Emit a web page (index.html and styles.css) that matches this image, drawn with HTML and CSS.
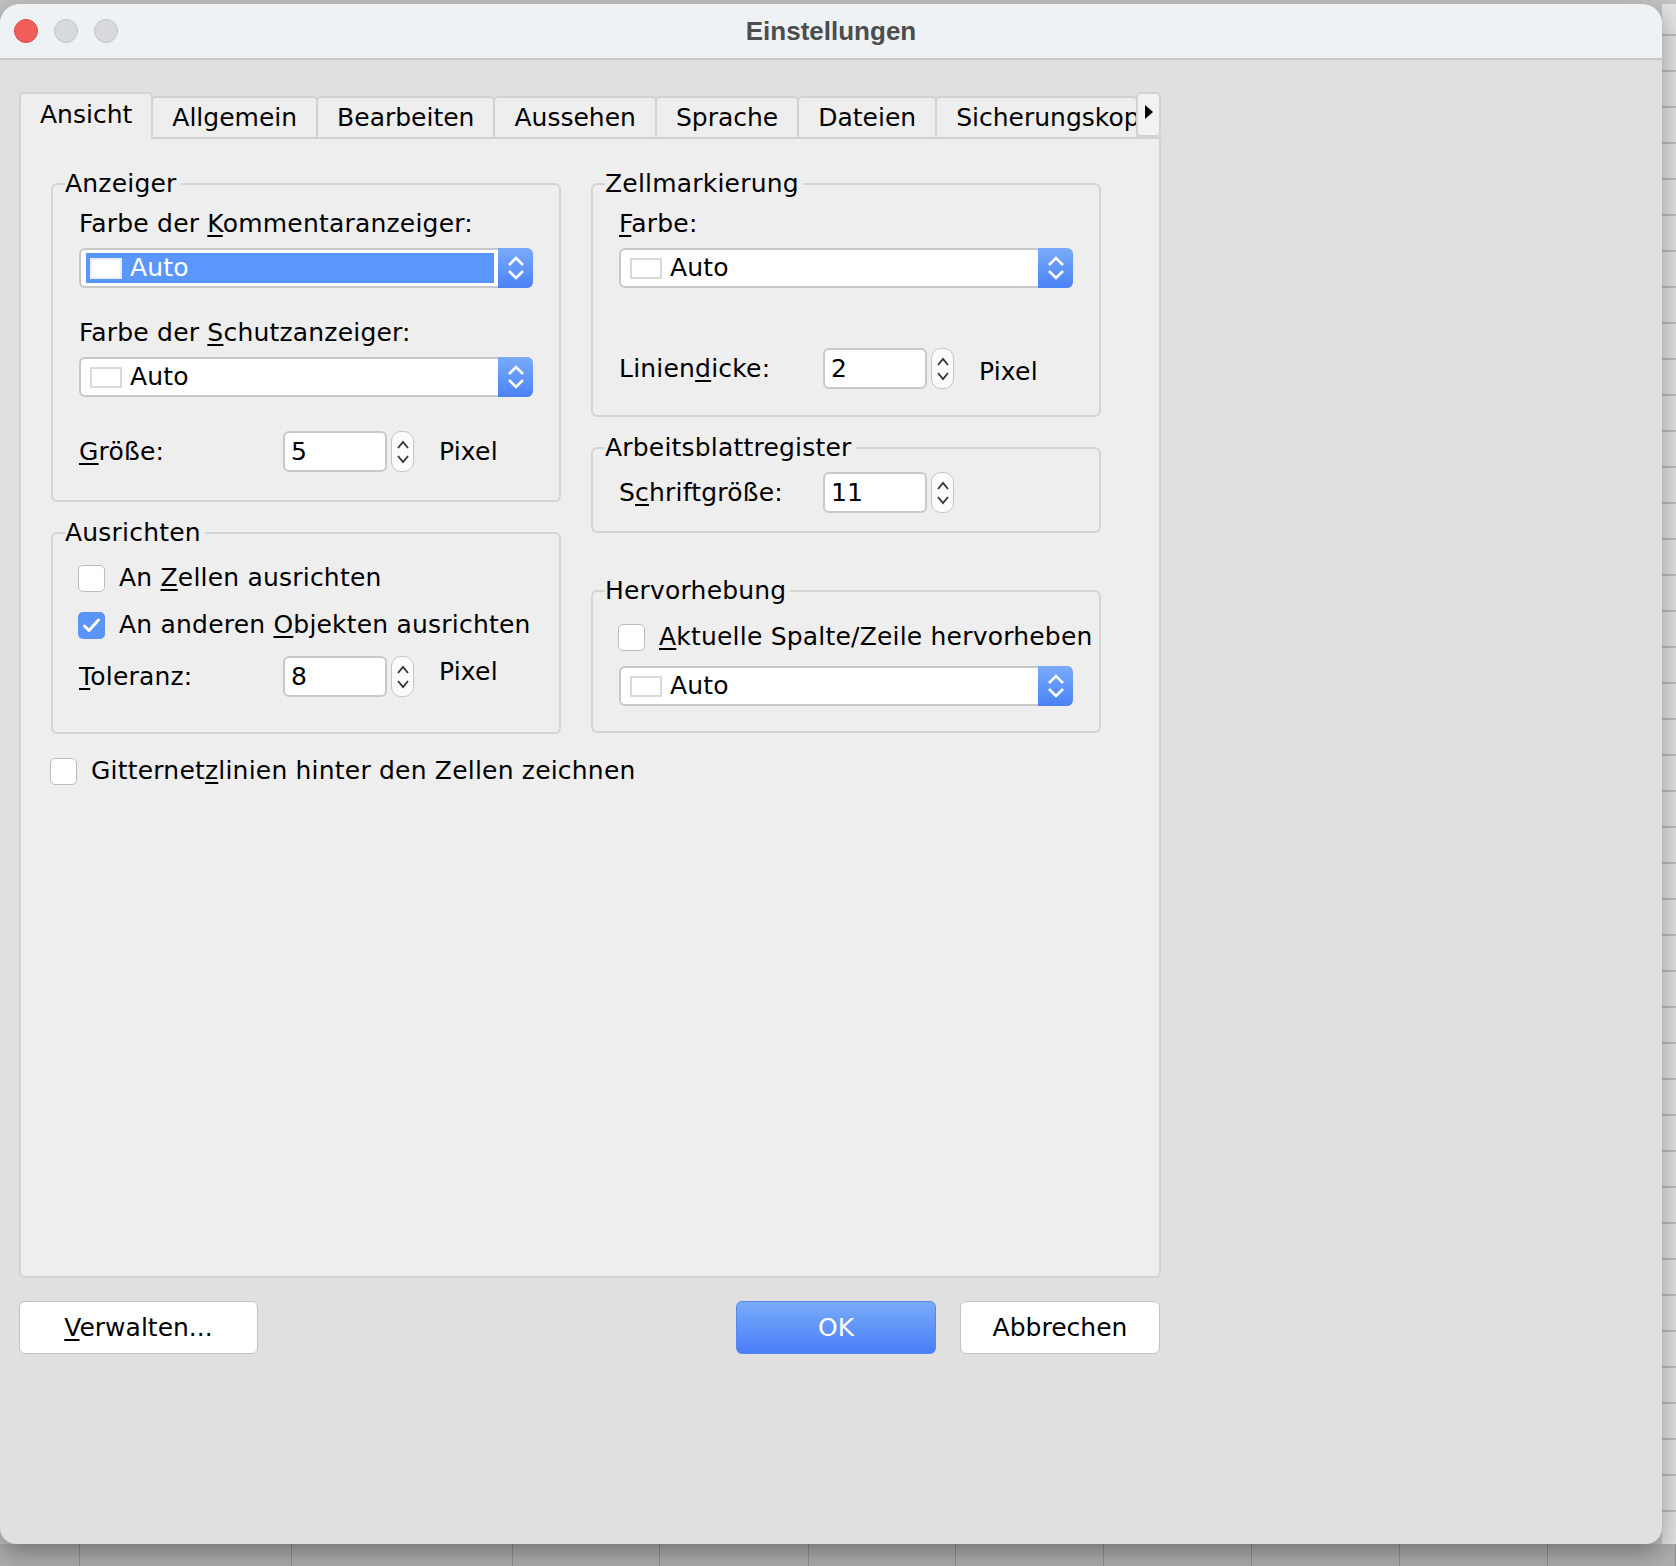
FILE: index.html
```html
<!DOCTYPE html>
<html lang="de">
<head>
  <meta charset="UTF-8">
  <title>Einstellungen</title>
  <link rel="stylesheet" href="styles.css">
</head>
<body>
  <div class="desktop">
    <div class="window">
      <div class="titlebar">
        <div class="lights">
          <span class="light close"></span>
          <span class="light"></span>
          <span class="light"></span>
        </div>
        <div class="title">Einstellungen</div>
      </div>

      <div class="dialog">
        <div class="tabs">
          <div class="tab active">Ansicht</div>
          <div class="tab">Allgemein</div>
          <div class="tab">Bearbeiten</div>
          <div class="tab">Aussehen</div>
          <div class="tab">Sprache</div>
          <div class="tab">Dateien</div>
          <div class="tab clipped">Sicherungskop</div>
          <div class="tab-more">
            <svg width="8" height="14" viewBox="0 0 8 14"><path d="M0 0 L8 7 L0 14 Z" fill="#000"/></svg>
          </div>
        </div>

        <div class="panel">
          <div class="columns">
            <div class="col">
              <fieldset class="group anzeiger">
                <legend>Anzeiger</legend>
                <div class="field-label">Farbe der <u>K</u>ommentaranzeiger:</div>
                <div class="combo focused">
                  <div class="combo-value"><span class="swatch"></span>Auto</div>
                  <div class="combo-arrow">
                    <svg width="16" height="24" viewBox="0 0 16 24"><path d="M1 9 L8 2 L15 9 M1 15 L8 22 L15 15" fill="none" stroke="#fff" stroke-width="2.5"/></svg>
                  </div>
                </div>
                <div class="field-label spaced">Farbe der <u>S</u>chutzanzeiger:</div>
                <div class="combo">
                  <div class="combo-value"><span class="swatch"></span>Auto</div>
                  <div class="combo-arrow">
                    <svg width="16" height="24" viewBox="0 0 16 24"><path d="M1 9 L8 2 L15 9 M1 15 L8 22 L15 15" fill="none" stroke="#fff" stroke-width="2.5"/></svg>
                  </div>
                </div>
                <div class="spin-row size-row">
                  <span class="spin-label"><u>G</u>röße:</span>
                  <span class="spin-field">5</span>
                  <span class="spin-arrows">
                    <svg width="12" height="24" viewBox="0 0 12 24"><path d="M1 8 L6 2 L11 8 M1 16 L6 22 L11 16" fill="none" stroke="#333" stroke-width="1.8"/></svg>
                  </span>
                  <span class="unit">Pixel</span>
                </div>
              </fieldset>

              <fieldset class="group ausrichten">
                <legend>Ausrichten</legend>
                <label class="check"><span class="box"></span><span>An <u>Z</u>ellen ausrichten</span></label>
                <label class="check second"><span class="box checked">
                  <svg width="27" height="27" viewBox="0 0 27 27"><path d="M6.5 14 L11 18.5 L20.5 8" fill="none" stroke="#fff" stroke-width="3" stroke-linecap="round" stroke-linejoin="round"/></svg>
                </span><span>An anderen <u>O</u>bjekten ausrichten</span></label>
                <div class="spin-row tol-row">
                  <span class="spin-label"><u>T</u>oleranz:</span>
                  <span class="spin-field">8</span>
                  <span class="spin-arrows">
                    <svg width="12" height="24" viewBox="0 0 12 24"><path d="M1 8 L6 2 L11 8 M1 16 L6 22 L11 16" fill="none" stroke="#333" stroke-width="1.8"/></svg>
                  </span>
                  <span class="unit raised">Pixel</span>
                </div>
              </fieldset>
            </div>

            <div class="col">
              <fieldset class="group zell">
                <legend>Zellmarkierung</legend>
                <div class="field-label"><u>F</u>arbe:</div>
                <div class="combo">
                  <div class="combo-value"><span class="swatch"></span>Auto</div>
                  <div class="combo-arrow">
                    <svg width="16" height="24" viewBox="0 0 16 24"><path d="M1 9 L8 2 L15 9 M1 15 L8 22 L15 15" fill="none" stroke="#fff" stroke-width="2.5"/></svg>
                  </div>
                </div>
                <div class="spin-row line-row">
                  <span class="spin-label">Linien<u>d</u>icke:</span>
                  <span class="spin-field">2</span>
                  <span class="spin-arrows">
                    <svg width="12" height="24" viewBox="0 0 12 24"><path d="M1 8 L6 2 L11 8 M1 16 L6 22 L11 16" fill="none" stroke="#333" stroke-width="1.8"/></svg>
                  </span>
                  <span class="unit lowered">Pixel</span>
                </div>
              </fieldset>

              <fieldset class="group register">
                <legend>Arbeitsblattregister</legend>
                <div class="spin-row">
                  <span class="spin-label">S<u>c</u>hriftgröße:</span>
                  <span class="spin-field">11</span>
                  <span class="spin-arrows">
                    <svg width="12" height="24" viewBox="0 0 12 24"><path d="M1 8 L6 2 L11 8 M1 16 L6 22 L11 16" fill="none" stroke="#333" stroke-width="1.8"/></svg>
                  </span>
                </div>
              </fieldset>

              <fieldset class="group highlight">
                <legend>Hervorhebung</legend>
                <label class="check"><span class="box"></span><span><u>A</u>ktuelle Spalte/Zeile hervorheben</span></label>
                <div class="combo below-check">
                  <div class="combo-value"><span class="swatch"></span>Auto</div>
                  <div class="combo-arrow">
                    <svg width="16" height="24" viewBox="0 0 16 24"><path d="M1 9 L8 2 L15 9 M1 15 L8 22 L15 15" fill="none" stroke="#fff" stroke-width="2.5"/></svg>
                  </div>
                </div>
              </fieldset>
            </div>
          </div>

          <label class="check grid-check"><span class="box"></span><span>Gitternet<u>z</u>linien hinter den Zellen zeichnen</span></label>
        </div>

        <div class="buttons">
          <button class="btn manage"><u>V</u>erwalten...</button>
          <button class="btn ok">OK</button>
          <button class="btn cancel">Abbrechen</button>
        </div>
      </div>
    </div>
    <div class="sheet-edge"></div>
  </div>

  <div class="sheet-footer">
    <span></span><span></span><span></span><span></span><span></span><span></span>
    <span></span><span></span><span></span><span></span><span></span>
  </div>
</body>
</html>
```

FILE: styles.css
```css
* {
  box-sizing: border-box;
}

body {
  margin: 0;
  background: #c4c4c4;
  font-family: "DejaVu Sans", sans-serif;
  font-size: 25px;
  line-height: 30px;
  color: #000;
  overflow: hidden;
}

u {
  text-decoration-thickness: 2px;
  text-underline-offset: 3px;
}

.desktop {
  display: flex;
  padding-top: 4px;
}

.window {
  flex: none;
  width: 1662px;
  height: 1540px;
  background: #e0e0e0;
  border-radius: 20px 20px 16px 16px;
  box-shadow: 0 8px 26px rgba(0, 0, 0, 0.35);
  overflow: hidden;
  position: relative;
  z-index: 1;
}

.sheet-edge {
  flex: 1;
  height: 1540px;
  background: repeating-linear-gradient(to bottom, transparent 0 34px, #bcbcbc 34px 36px), #e2e2e2;
  background-position: 0 -4px;
}

.sheet-footer {
  display: grid;
  grid-template-columns: 80px 212px 221px 147px 149px 147px 148px 148px 148px 148px 1fr;
  height: 22px;
  background: #adadad;
}

.sheet-footer span {
  border-right: 1px solid #8e8e8e;
}

/* title bar */
.titlebar {
  height: 56px;
  background: #eff2f5;
  border-bottom: 2px solid #c7c7c7;
  display: grid;
  grid-template-columns: 1fr auto 1fr;
  align-items: center;
}

.lights {
  display: flex;
  gap: 16px;
  padding-left: 14px;
}

.light {
  width: 24px;
  height: 24px;
  border-radius: 50%;
  background: #d7d9dc;
  border: 1px solid #c2c4c7;
}

.light.close {
  background: #f15d5b;
  border-color: #d94947;
}

.title {
  font-family: "Liberation Sans", Arial, sans-serif;
  font-weight: bold;
  font-size: 26px;
  color: #4d4d4d;
}

/* dialog */
.dialog {
  width: 1142px;
  margin-left: 19px;
  padding-top: 32px;
}

.tabs {
  display: flex;
  align-items: flex-end;
  height: 45px;
}

.tab {
  height: 41px;
  padding: 0 19px;
  margin-left: -2px;
  border: 2px solid #d2d2d2;
  border-bottom: none;
  border-radius: 5px 5px 0 0;
  background: #eeeeee;
  display: flex;
  align-items: center;
  white-space: nowrap;
}

.tab:first-child {
  margin-left: 0;
}

.tab.active {
  height: 47px;
  margin-bottom: -2px;
  padding-bottom: 4px;
  position: relative;
  z-index: 1;
}

.tab.clipped {
  flex: 1;
  padding-right: 0;
  overflow: hidden;
}

.tab-more {
  width: 25px;
  height: 45px;
  margin-left: -2px;
  border: 2px solid #d2d2d2;
  border-radius: 5px;
  background: #f2f2f2;
  display: flex;
  align-items: center;
  justify-content: center;
  padding-bottom: 6px;
}

.panel {
  height: 1141px;
  border: 2px solid #d2d2d2;
  border-radius: 0 0 6px 6px;
  background: #eeeeee;
  padding: 30px 30px 0;
  letter-spacing: 0.2px;
}

.columns {
  display: grid;
  grid-template-columns: 510px 510px;
  column-gap: 30px;
  align-items: start;
}

.col {
  display: flex;
  flex-direction: column;
}

/* group boxes */
.group {
  margin: 0;
  min-width: 0;
  border: 2px solid #d4d4d4;
  border-radius: 6px;
  padding: 10px 26px 26px;
}

.group legend {
  margin-left: -14px;
  padding: 0 4px 0 0;
}

.anzeiger {
  padding-bottom: 28px;
}

.ausrichten {
  margin-top: 16px;
  padding-top: 15px;
  padding-bottom: 35px;
}

.register {
  margin-top: 16px;
  padding-top: 9px;
  padding-bottom: 18px;
}

.highlight {
  margin-top: 43px;
  padding-top: 16px;
  padding-bottom: 25px;
}

.field-label {
  margin-bottom: 9px;
}

.field-label.spaced {
  margin-top: 30px;
}

/* combo boxes */
.combo {
  display: flex;
  height: 40px;
  border: 2px solid #c8c8c8;
  border-right: none;
  border-radius: 6px;
  background: #fff;
}

.combo.below-check {
  margin-top: 14px;
}

.combo-value {
  flex: 1;
  display: flex;
  align-items: center;
  gap: 8px;
  padding-left: 9px;
}

.combo.focused .combo-value {
  margin: 3px 4px 3px 5px;
  padding-left: 4px;
  background: #5a96fc;
  color: #fff;
}

.combo-arrow {
  width: 35px;
  margin: -2px 0;
  border-radius: 0 6px 6px 0;
  background: linear-gradient(#7aabf9, #4a82f7);
  display: flex;
  align-items: center;
  justify-content: center;
}

.swatch {
  width: 32px;
  height: 21px;
  border: 2px solid #d9d9d9;
  background: #fff;
}

.combo.focused .swatch {
  border-color: #e8eefa;
}

/* spinners */
.spin-row {
  display: flex;
  align-items: center;
  height: 41px;
}

.size-row {
  margin-top: 34px;
}

.tol-row {
  margin-top: 16px;
}

.line-row {
  margin-top: 60px;
}

.spin-label {
  width: 204px;
}

.spin-field {
  width: 104px;
  height: 41px;
  border: 2px solid #c9c9c9;
  border-radius: 6px;
  background: #fff;
  padding-left: 6px;
  display: flex;
  align-items: center;
}

.spin-arrows {
  width: 23px;
  height: 41px;
  margin-left: 4px;
  border: 1.5px solid #c6c6c6;
  border-radius: 10px;
  background: #fbfbfb;
  display: flex;
  align-items: center;
  justify-content: center;
}

.unit {
  margin-left: 25px;
}

.unit.raised {
  margin-top: -10px;
}

.unit.lowered {
  margin-top: 6px;
}

/* checkboxes */
.check {
  display: flex;
  align-items: center;
  gap: 14px;
  height: 30px;
  margin-left: -1px;
  white-space: nowrap;
}

.check.second {
  margin-top: 17px;
}

.box {
  flex: none;
  width: 27px;
  height: 27px;
  border: 1.5px solid #bcbcbc;
  border-radius: 5px;
  background: #fff;
}

.box.checked {
  border: none;
  background: #5a94f6;
}

.box.checked svg {
  display: block;
}

.grid-check {
  margin-top: 22px;
}

/* buttons */
.buttons {
  display: flex;
  gap: 24px;
  margin-top: 23px;
  padding-right: 1px;
}

.btn {
  height: 53px;
  width: 200px;
  border: 1.5px solid #c2c2c2;
  border-radius: 6px;
  background: #fff;
  font-family: "DejaVu Sans", sans-serif;
  font-size: 25px;
  color: #000;
  padding: 0;
}

.btn.manage {
  width: 239px;
  margin-right: auto;
}

.btn.ok {
  border-color: #5687f2;
  background: linear-gradient(#79acf9, #4a7df8);
  color: #fff;
}
```
